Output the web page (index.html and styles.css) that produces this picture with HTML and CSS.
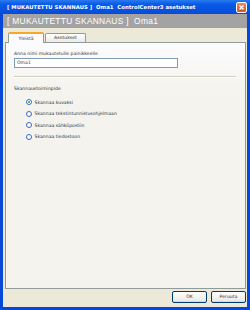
FILE: index.html
```html
<!DOCTYPE html>
<html>
<head>
<meta charset="utf-8">
<link rel="stylesheet" href="styles.css">
</head>
<body>
<div class="window">
  <div class="titlebar">
    <span class="title">[ MUKAUTETTU SKANNAUS ]&nbsp; Oma1 &nbsp;ControlCenter3 asetukset</span>
    <span class="close"><svg width="9" height="9" viewBox="0 0 9 9"><path d="M2.5 2.5 L6.5 6.5 M6.5 2.5 L2.5 6.5" stroke="#fff" stroke-width="1.3"/></svg></span>
  </div>
  <div class="frame">
    <div class="header">[ MUKAUTETTU SKANNAUS ]&nbsp; Oma1</div>
    <div class="content">
      <div class="tabs">
        <div class="tab active">Yleistä</div>
        <div class="tab">Asetukset</div>
      </div>
      <div class="panel">
        <div class="label">Anna nimi mukautetulle painikkeelle</div>
        <div class="input">Oma1</div>
        <div class="sep"></div>
        <div class="label group">Skannaustoiminpide</div>
        <div class="radios">
          <div class="radio"><span class="dot checked"></span>Skannaa kuvaksi</div>
          <div class="radio"><span class="dot"></span>Skannaa tekstintunnistusohjelmaan</div>
          <div class="radio"><span class="dot"></span>Skannaa sähköpostiin</div>
          <div class="radio"><span class="dot"></span>Skannaa tiedostoon</div>
        </div>
      </div>
      <div class="buttons">
        <div class="btn">OK</div>
        <div class="btn">Peruuta</div>
      </div>
    </div>
  </div>
</div>
</body>
</html>
```
FILE: styles.css
```css
html, body {
  margin: 0;
  padding: 0;
}
body {
  width: 250px;
  height: 310px;
  overflow: hidden;
  font-family: "DejaVu Sans", "Liberation Sans", sans-serif;
}
.window {
  width: 250px;
  height: 310px;
  display: flex;
  flex-direction: column;
  background: #0848d8;
}
.titlebar {
  height: 14px;
  flex: none;
  display: flex;
  align-items: center;
  padding: 0 3px 0 7px;
  background: linear-gradient(#2a7af0, #0a5ae6 30%, #0650e0 80%, #0a4ad0);
  color: #fff;
}
.title {
  flex: 1;
  font-size: 5.3px;
  font-weight: bold;
  white-space: nowrap;
  letter-spacing: 0.05px;
}
.close {
  width: 9px;
  height: 9px;
  border: 1px solid #fff;
  border-radius: 2px;
  background: linear-gradient(#f08a5a, #e0502a);
  display: flex;
}
.frame {
  flex: 1;
  display: flex;
  flex-direction: column;
  margin: 0 3px 3px 3px;
  background: #ece9d8;
}
.header {
  height: 14px;
  flex: none;
  background: #a3a3a3;
  color: #fff;
  font-family: "Liberation Sans", "DejaVu Sans", sans-serif;
  font-size: 8.4px;
  letter-spacing: 0.3px;
  line-height: 14px;
  padding-left: 4px;
  white-space: nowrap;
}
.content {
  flex: 1;
  display: flex;
  flex-direction: column;
  padding: 3px 1px 4px 2px;
}
.tabs {
  display: flex;
  height: 11px;
  padding-left: 2px;
  align-items: flex-end;
  position: relative;
  z-index: 1;
}
.tab {
  font-size: 4.6px;
  color: #333;
  border: 1px solid #919b9c;
  border-bottom: none;
  border-radius: 2px 2px 0 0;
  background: linear-gradient(#fff, #ecebe6);
  height: 8px;
  line-height: 8px;
  text-align: center;
  width: 39px;
  margin-left: 1px;
}
.tab.active {
  width: 34px;
  line-height: 9px;
  border-top: 2px solid #f5a82a;
  background: #fcfcfe;
  margin-bottom: -1px;
  height: 9px;
}
.panel {
  flex: 1;
  border: 1px solid #919b9c;
  background: linear-gradient(#fcfcfe, #f4f3ee 20%);
  padding: 8px 8px 0 8px;
  display: flex;
  flex-direction: column;
}
.label {
  font-size: 4.6px;
  color: #333;
  line-height: 6px;
}
.input {
  margin-top: 1px;
  width: 160px;
  height: 8px;
  border: 1px solid #7f9db9;
  background: #fff;
  font-size: 4.6px;
  line-height: 8px;
  padding-left: 2px;
  color: #333;
}
.sep {
  margin-top: 8px;
  height: 0;
  border-top: 1px solid #d0d0bf;
  border-bottom: 1px solid #fff;
  margin-right: 1px;
}
.group {
  margin-top: 8px;
}
.radios {
  padding-left: 12px;
  margin-top: 7px;
  display: flex;
  flex-direction: column;
  gap: 5.5px;
}
.radio {
  display: flex;
  align-items: center;
  font-size: 4.6px;
  color: #333;
  height: 6px;
}
.dot {
  width: 4px;
  height: 4px;
  border: 1px solid #3768c8;
  border-radius: 50%;
  background: #fff;
  margin-right: 2.5px;
  position: relative;
}
.dot.checked::after {
  content: "";
  position: absolute;
  left: 1px;
  top: 1px;
  width: 2px;
  height: 2px;
  border-radius: 50%;
  background: #30a030;
}
.buttons {
  display: flex;
  justify-content: flex-end;
  gap: 4px;
  padding-top: 2px;
}
.btn {
  width: 33px;
  height: 10px;
  border: 1px solid #003c74;
  border-radius: 2px;
  background: linear-gradient(#fff, #ecebe6 85%, #d6d0c5);
  font-size: 4.6px;
  line-height: 10px;
  text-align: center;
  color: #333;
}
```
